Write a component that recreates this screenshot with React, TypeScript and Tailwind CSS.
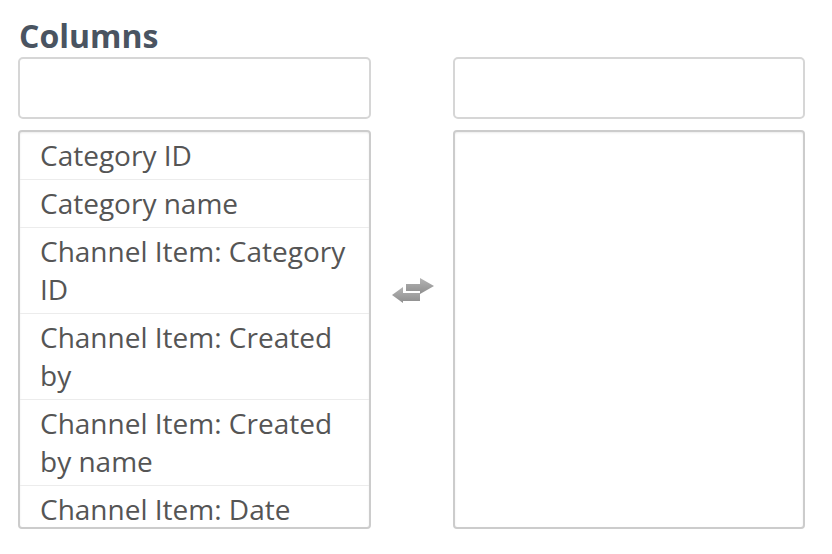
import React from "react";

const items: string[] = [
  "Category ID",
  "Category name",
  "Channel Item: Category ID",
  "Channel Item: Created by",
  "Channel Item: Created by name",
  "Channel Item: Date",
];

function SwapIcon() {
  return (
    <svg width="44" height="27" viewBox="0 0 44 27">
      <defs>
        <linearGradient id="g1" x1="0" y1="0" x2="0" y2="1">
          <stop offset="0" stopColor="#b4b4b4" />
          <stop offset="1" stopColor="#8e8e8e" />
        </linearGradient>
      </defs>
      <path d="M15 7 H29 V1 L43 9 L29 17 V14 H15 Z" fill="url(#g1)" />
      <path d="M29 16 H12 V10 L1 18 L12 26 V24 H29 Z" fill="url(#g1)" />
    </svg>
  );
}

export default function App() {
  return (
    <div
      className="w-[832px] h-[554px] bg-white pl-[18px] pt-[19px]"
      style={{ fontFamily: '"Open Sans", sans-serif' }}
    >
      <h2 className="text-[32px] leading-[33px] font-bold text-[#4a5461] ml-[1px]">Columns</h2>
      <div className="flex mt-[5px]">
        <div className="w-[353px] flex flex-col">
          <div className="h-[62px] border-2 border-[#d6d6d6] rounded-[5px] bg-white" />
          <div className="mt-[11px] h-[399px] border-2 border-[#cccccc] rounded-[4px] overflow-hidden shadow-[inset_0_1px_2px_rgba(0,0,0,0.08)]">
            {items.map((t, i) => (
              <div
                key={i}
                className="pl-[20px] pr-[16px] pt-[4px] pb-[5px] text-[28px] leading-[38px] text-[#555555] border-b border-[#ececec]"
              >
                {t}
              </div>
            ))}
          </div>
        </div>
        <div className="w-[82px] flex items-start justify-center pt-[220px]">
          <div className="ml-[2px]">
            <SwapIcon />
          </div>
        </div>
        <div className="w-[352px] flex flex-col">
          <div className="h-[62px] border-2 border-[#d6d6d6] rounded-[5px] bg-white" />
          <div className="mt-[11px] h-[399px] border-2 border-[#cccccc] rounded-[4px] shadow-[inset_0_1px_2px_rgba(0,0,0,0.08)]" />
        </div>
      </div>
    </div>
  );
}
